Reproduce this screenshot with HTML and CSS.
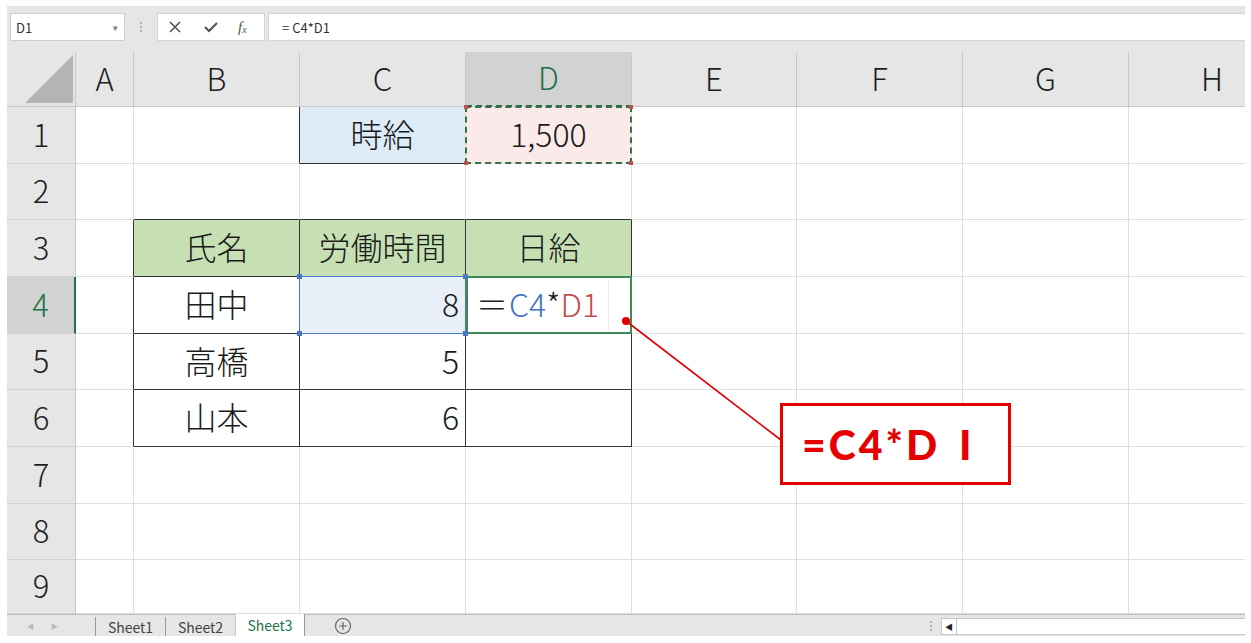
FILE: index.html
```html
<!DOCTYPE html>
<html lang="ja">
<head>
<meta charset="utf-8">
<title>Excel</title>
<link rel="stylesheet" href="styles.css">
</head>
<body>
<div class="app">
  <div class="fbar">
    <div class="namebox"><span>D1</span><span class="dd">&#9662;</span></div>
    <div class="vdots"><i></i><i></i><i></i></div>
    <div class="fbtns">
      <svg class="ic-x" width="14" height="14" viewBox="0 0 14 14"><path d="M2 2L12 12M12 2L2 12" stroke="#555" stroke-width="1.6" fill="none"/></svg>
      <svg class="ic-ok" width="16" height="14" viewBox="0 0 16 14"><path d="M2 7L6 11L14 3" stroke="#555" stroke-width="2.2" fill="none"/></svg>
      <span class="fx">f<sub>x</sub></span>
    </div>
    <div class="finput">= C4*D1</div>
  </div>

  <table class="sheet">
    <colgroup>
      <col class="w-rh"><col class="w-a"><col class="w-b"><col class="w-c"><col class="w-d"><col class="w-e"><col class="w-f"><col class="w-g"><col class="w-h">
    </colgroup>
    <tr class="hrow">
      <th class="corner"><svg width="69" height="54" viewBox="0 0 69 54"><polygon points="66,3 66,51 18,51" fill="#b4b4b4"/></svg></th>
      <th>A</th><th>B</th><th>C</th><th class="hsel-col">D</th><th>E</th><th>F</th><th>G</th><th class="hlast">H</th>
    </tr>
    <tr class="r57">
      <th class="rh">1</th><td></td><td class="rb"></td><td class="c1 bb">時給</td><td class="d1">1,500<i class="m tl"></i><i class="m tr"></i><i class="m bl"></i><i class="m br"></i></td><td></td><td></td><td></td><td></td>
    </tr>
    <tr class="r56">
      <th class="rh">2</th><td></td><td class="bb"></td><td class="bb"></td><td class="bb"></td><td></td><td></td><td></td><td></td>
    </tr>
    <tr class="r57">
      <th class="rh">3</th><td class="rb"></td><td class="hd rb bb">氏名</td><td class="hd rb bb">労働時間</td><td class="hd rb bb">日給</td><td></td><td></td><td></td><td></td>
    </tr>
    <tr class="r57">
      <th class="rh hsel-row">4</th><td class="rb"></td><td class="ctr rb bb">田中</td><td class="num rb bb c4">8<i class="h tl"></i><i class="h tr"></i><i class="h bl"></i><i class="h br"></i></td><td class="rb bb d4"><span class="eq">＝</span><span class="ref1">C4</span>*<span class="ref2">D1</span><i class="caret"></i></td><td></td><td></td><td></td><td></td>
    </tr>
    <tr class="r56">
      <th class="rh">5</th><td class="rb"></td><td class="ctr rb bb">高橋</td><td class="num rb bb">5</td><td class="rb bb"></td><td></td><td></td><td></td><td></td>
    </tr>
    <tr class="r57">
      <th class="rh">6</th><td class="rb"></td><td class="ctr rb bb">山本</td><td class="num rb bb">6</td><td class="rb bb"></td><td></td><td></td><td></td><td></td>
    </tr>
    <tr class="r57">
      <th class="rh">7</th><td></td><td></td><td></td><td></td><td></td><td></td><td></td><td></td>
    </tr>
    <tr class="r56">
      <th class="rh">8</th><td></td><td></td><td></td><td></td><td></td><td></td><td></td><td></td>
    </tr>
    <tr class="r54">
      <th class="rh">9</th><td></td><td></td><td></td><td></td><td></td><td></td><td></td><td></td>
    </tr>
  </table>

  <div class="tabbar">
    <div class="nav"><span>&#9664;</span><span>&#9654;</span></div>
    <div class="tab">Sheet1</div>
    <div class="tab">Sheet2</div>
    <div class="tab active">Sheet3</div>
    <div class="addtab"><svg width="18" height="18" viewBox="0 0 18 18"><circle cx="9" cy="9" r="7.5" stroke="#666" stroke-width="1.2" fill="none"/><path d="M9 5V13M5 9H13" stroke="#666" stroke-width="1.2"/></svg></div>
    <div class="spacer"></div>
    <div class="vdots small"><i></i><i></i><i></i></div>
    <div class="hscroll"><span class="larr">&#9664;</span></div>
  </div>

  <svg class="leader" width="200" height="140" viewBox="0 0 200 140">
    <circle cx="7" cy="7" r="4" fill="#e00000"/>
    <line x1="7" y1="7" x2="162" y2="126" stroke="#e00000" stroke-width="1.6"/>
  </svg>
  <div class="callout">=C4*D I</div>
</div>
</body>
</html>
```

FILE: styles.css
```css
html, body {
  margin: 0;
  padding: 0;
  background: #ffffff;
}
body {
  font-family: "Noto Sans CJK JP", "Noto Sans", sans-serif;
  color: #222;
}
.app {
  position: relative;
  margin: 6px 0 0 7px;
  width: 1238px;
  background: #e6e6e6;
}
.fbar {
  height: 46px;
  display: flex;
  align-items: flex-start;
  padding-top: 7px;
  box-sizing: border-box;
}
.namebox {
  margin-left: 3px;
  width: 115px;
  height: 28px;
  box-sizing: border-box;
  background: #fff;
  border: 1px solid #cfcfcf;
  display: flex;
  align-items: center;
  justify-content: space-between;
  padding: 0 6px 0 5px;
  font-size: 13px;
  color: #333;
}
.namebox .dd {
  font-size: 9px;
  color: #777;
}
.vdots {
  width: 32px;
  height: 28px;
  display: flex;
  flex-direction: column;
  align-items: center;
  justify-content: center;
  gap: 2px;
}
.vdots i {
  display: block;
  width: 2px;
  height: 2px;
  background: #b0b0b0;
}
.fbtns {
  width: 108px;
  height: 28px;
  box-sizing: border-box;
  background: #fff;
  border: 1px solid #d4d4d4;
  display: flex;
  align-items: center;
  padding-left: 10px;
}
.ic-x { margin-right: 21px; }
.ic-ok { margin-right: 19px; }
.fx {
  font-family: "Liberation Serif", serif;
  font-style: italic;
  font-size: 15px;
  color: #555;
}
.fx sub {
  font-size: 10px;
  vertical-align: -1px;
}
.finput {
  margin-left: 3px;
  flex: 1;
  height: 28px;
  box-sizing: border-box;
  background: #fff;
  border: 1px solid #d4d4d4;
  border-right: none;
  display: flex;
  align-items: center;
  padding-left: 13px;
  font-size: 13px;
  color: #333;
}

.sheet {
  border-collapse: separate;
  border-spacing: 0;
  table-layout: fixed;
  width: 1238px;
  background: #fff;
}
.w-rh { width: 69px; }
.w-a { width: 58px; }
.w-b { width: 166px; }
.w-c { width: 166px; }
.w-d { width: 166px; }
.w-e { width: 165px; }
.w-f { width: 166px; }
.w-g { width: 166px; }
.w-h { width: 116px; }

.sheet th, .sheet td {
  padding: 0 0 4px 0;
  box-sizing: border-box;
  border-right: 1px solid #dedede;
  border-bottom: 1px solid #dedede;
  position: relative;
  font-weight: 300;
}
.hrow { height: 54px; }
.r57 { height: 57px; }
.r56 { height: 56px; }
.r54 { height: 54px; }

.hrow th {
  background: #e6e6e6;
  font-size: 31px;
  color: #1e1e1e;
  border-right: 1px solid #c9c9c9;
  border-bottom: 1px solid #c9c9c9;
  padding-bottom: 4px;
}
.hrow th.corner {
  padding: 0;
  line-height: 0;
}
.hrow th.corner svg { display: block; }
.hrow th.hsel-col {
  background: #d2d2d2;
  color: #217346;
  border-bottom: 2px dashed #217346;
}
.hrow th.hlast {
  border-right: none;
  padding-left: 50px;
}

.rh {
  background: #e6e6e6;
  font-size: 31px;
  color: #1e1e1e;
  border-right: 1px solid #c9c9c9 !important;
  border-bottom: 1px solid #d2d2d2 !important;
}
.rh.hsel-row {
  background: #d2d2d2;
  color: #217346;
  border-right: 2px solid #217346 !important;
}

.sheet td {
  font-size: 32px;
  color: #1a1a1a;
}
.sheet td:last-child { border-right: none; }

.rb { border-right: 1px solid #333 !important; }
.bb { border-bottom: 1px solid #333 !important; }

.c1 {
  background: #ddebf7;
  text-align: center;
}
.d1 {
  background: #fbeaea;
  text-align: center;
}
.d1::after {
  content: "";
  position: absolute;
  left: -1px;
  top: -1px;
  right: -1px;
  bottom: -1px;
  border: 2px dashed #3b6f48;
  pointer-events: none;
}
.m {
  position: absolute;
  width: 4px;
  height: 4px;
  background: #c0504d;
  z-index: 2;
}
.m.tl { left: -2px; top: -2px; }
.m.tr { right: -2px; top: -2px; }
.m.bl { left: -2px; bottom: -2px; }
.m.br { right: -2px; bottom: -2px; }

.hd {
  background: #c6e0b4;
  text-align: center;
}
.ctr { text-align: center; }
.num {
  text-align: right;
  padding-right: 6px !important;
}
.c4 {
  background: #e9f0fa;
}
.c4::after {
  content: "";
  position: absolute;
  left: -1px;
  top: -1px;
  right: -1px;
  bottom: -1px;
  border: 1px solid #4a78c8;
}
.h {
  position: absolute;
  width: 5px;
  height: 5px;
  background: #4a78c8;
  z-index: 2;
}
.h.tl { left: -3px; top: -3px; }
.h.tr { right: -3px; top: -3px; }
.h.bl { left: -3px; bottom: -3px; }
.h.br { right: -3px; bottom: -3px; }

.d4 {
  text-align: left;
  padding-left: 10px !important;
}
.d4::after {
  content: "";
  position: absolute;
  left: 0;
  top: -1px;
  right: -1px;
  bottom: -1px;
  border: 2px solid #3e8a55;
}
.eq { color: #222; margin-right: 1px; }
.ref1 { color: #4472c4; }
.ref2 { color: #c0504d; }
.caret {
  position: absolute;
  left: 142px;
  top: 3px;
  bottom: 3px;
  width: 1px;
  background: #e8e8e8;
}

.tabbar {
  height: 22px;
  display: flex;
  align-items: stretch;
  background: #e6e6e6;
  border-top: 1px solid #bdbdbd;
  box-sizing: border-box;
  font-size: 14px;
  color: #444;
}
.nav {
  width: 88px;
  display: flex;
  align-items: center;
  gap: 17px;
  padding-left: 20px;
  box-sizing: border-box;
  font-size: 7px;
  color: #b9b9b9;
}
.tab {
  width: 70px;
  box-sizing: border-box;
  border-left: 1px solid #9a9a9a;
  margin-top: 2px;
  display: flex;
  align-items: center;
  justify-content: center;
  line-height: 1;
}
.tab.active {
  background: #fff;
  color: #217346;
  margin-top: -1px;
  border-left: 1px solid #c8c8c8;
  border-right: 1px solid #9a9a9a;
}
.addtab {
  width: 76px;
  display: flex;
  align-items: center;
  justify-content: center;
}
.spacer { flex: 1; }
.vdots.small {
  width: 20px;
  height: auto;
  gap: 2px;
}
.hscroll {
  width: 304px;
  margin: 3px 0 1px 0;
  background: #fff;
  border: 1px solid #c6c6c6;
  border-right: none;
  box-sizing: border-box;
  display: flex;
  align-items: center;
}
.larr {
  width: 14px;
  height: 100%;
  display: flex;
  align-items: center;
  justify-content: center;
  border-right: 1px solid #c6c6c6;
  font-size: 8px;
  color: #222;
}

.leader {
  position: absolute;
  left: 612px;
  top: 308px;
}
.callout {
  position: absolute;
  left: 773px;
  top: 397px;
  width: 231px;
  height: 82px;
  box-sizing: border-box;
  border: 3px solid #e60000;
  background: #fff;
  color: #e60000;
  font-family: "Lato", "Noto Sans", sans-serif;
  font-weight: 900;
  font-size: 41px;
  display: flex;
  align-items: center;
  padding-left: 19px;
  letter-spacing: 3px;
  word-spacing: 6px;
}
```
